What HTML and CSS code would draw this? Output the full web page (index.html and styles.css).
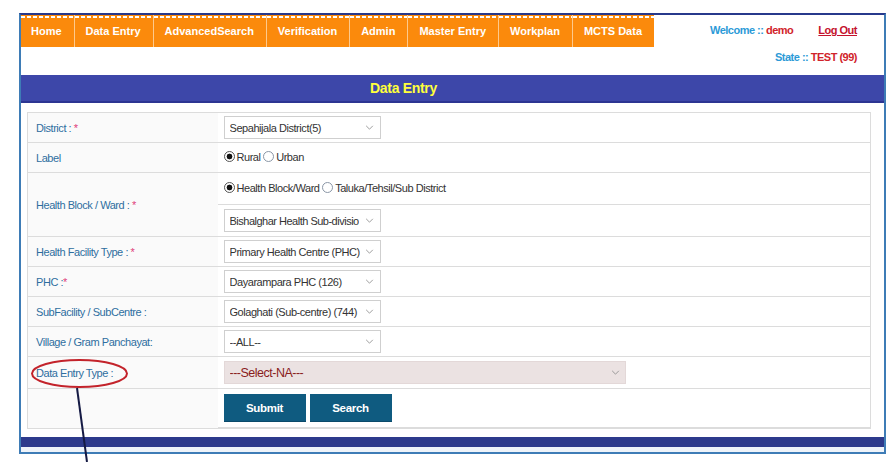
FILE: index.html
```html
<!DOCTYPE html>
<html lang="en">
<head>
<meta charset="utf-8">
<title>Data Entry</title>
<link rel="stylesheet" href="styles.css">
</head>
<body>
<div class="page">
  <div class="frame">
    <header class="top">
      <nav class="tabs">
        <a class="tab tab-home">Home</a>
        <a class="tab">Data Entry</a>
        <a class="tab">AdvancedSearch</a>
        <a class="tab">Verification</a>
        <a class="tab">Admin</a>
        <a class="tab">Master Entry</a>
        <a class="tab">Workplan</a>
        <a class="tab">MCTS Data</a>
      </nav>
      <div class="user">
        <div class="user-line">
          <span class="welcome">Welcome :: <span class="red">demo</span></span>
          <a class="logout">Log Out</a>
        </div>
        <div class="state">State :: <span class="red">TEST (99)</span></div>
      </div>
    </header>

    <h1 class="titlebar">Data Entry</h1>

    <div class="form-wrap">
      <table class="form">
        <tr class="r30">
          <td class="lbl">District : <span class="req">*</span></td>
          <td class="val"><span class="sel"><select><option>Sepahijala District(5)</option></select><svg class="chev" viewBox="0 0 10 6"><path d="M1 1 L5 5 L9 1"/></svg></span></td>
        </tr>
        <tr class="r30">
          <td class="lbl">Label</td>
          <td class="val"><label class="rad"><input type="radio" name="lv" checked>Rural</label> <label class="rad"><input type="radio" name="lv">Urban</label></td>
        </tr>
        <tr class="r32">
          <td class="lbl" rowspan="2">Health Block / Ward : <span class="req">*</span></td>
          <td class="val"><label class="rad"><input type="radio" name="hb" checked>Health Block/Ward</label> <label class="rad"><input type="radio" name="hb">Taluka/Tehsil/Sub District</label></td>
        </tr>
        <tr class="r32">
          <td class="val"><span class="sel sel-clip"><select><option>Bishalghar Health Sub-division (52)</option></select><svg class="chev" viewBox="0 0 10 6"><path d="M1 1 L5 5 L9 1"/></svg></span></td>
        </tr>
        <tr class="r30">
          <td class="lbl">Health Facility Type : <span class="req">*</span></td>
          <td class="val"><span class="sel"><select><option>Primary Health Centre (PHC)</option></select><svg class="chev" viewBox="0 0 10 6"><path d="M1 1 L5 5 L9 1"/></svg></span></td>
        </tr>
        <tr class="r30">
          <td class="lbl">PHC :<span class="req">*</span></td>
          <td class="val"><span class="sel"><select><option>Dayarampara PHC (126)</option></select><svg class="chev" viewBox="0 0 10 6"><path d="M1 1 L5 5 L9 1"/></svg></span></td>
        </tr>
        <tr class="r30">
          <td class="lbl">SubFacility / SubCentre :</td>
          <td class="val"><span class="sel"><select><option>Golaghati (Sub-centre) (744)</option></select><svg class="chev" viewBox="0 0 10 6"><path d="M1 1 L5 5 L9 1"/></svg></span></td>
        </tr>
        <tr class="r30">
          <td class="lbl">Village / Gram Panchayat:</td>
          <td class="val"><span class="sel"><select><option>--ALL--</option></select><svg class="chev" viewBox="0 0 10 6"><path d="M1 1 L5 5 L9 1"/></svg></span></td>
        </tr>
        <tr class="r32">
          <td class="lbl">Data Entry Type :</td>
          <td class="val"><span class="sel sel-wide"><select><option>---Select-NA---</option></select><svg class="chev" viewBox="0 0 10 6"><path d="M1 1 L5 5 L9 1"/></svg></span></td>
        </tr>
        <tr class="r39">
          <td class="lbl"></td>
          <td class="val btns"><button class="btn">Submit</button><button class="btn">Search</button></td>
        </tr>
      </table>
    </div>

    <div class="footer-bar"></div>
  </div>

  <svg class="annot" width="896" height="462" viewBox="0 0 896 462">
    <ellipse cx="79.5" cy="373.5" rx="47.5" ry="13.5" fill="none" stroke="#c3232b" stroke-width="2"/>
    <line x1="77" y1="388" x2="87" y2="462" stroke="#151a44" stroke-width="2"/>
  </svg>
</div>
</body>
</html>
```

FILE: styles.css
```css
* { box-sizing: border-box; }

html, body {
  margin: 0;
  padding: 0;
  background: #ffffff;
}

body {
  font-family: "Liberation Sans", Arial, sans-serif;
  font-size: 11px;
  letter-spacing: -0.45px;
  color: #333;
}

.page {
  position: relative;
  width: 896px;
  height: 462px;
  overflow: hidden;
  padding-top: 13px;
  padding-left: 19px;
}

.frame {
  width: 867px;
  height: 441px;
  border: 2px solid #3e7cb6;
  border-top-color: #27398c;
  display: flex;
  flex-direction: column;
}

/* ---------- top navigation ---------- */
.top {
  display: flex;
  height: 60px;
}

.tabs {
  display: flex;
  height: 32px;
  align-self: flex-start;
}

.tab {
  display: block;
  height: 32px;
  line-height: 33px;
  padding: 0 12px 0 11px;
  background-color: #fb8a0c;
  background-image: repeating-linear-gradient(90deg, #ffffff 0 4px, transparent 4px 6px);
  background-size: 100% 2px;
  background-repeat: no-repeat;
  background-position: 0 1px;
  border-left: 1px solid #fdc98c;
  color: #ffffff;
  font-weight: bold;
  font-size: 11px;
  letter-spacing: 0;
  white-space: nowrap;
}

.tab-home {
  border-left: none;
  padding: 0 12px 0 10px;
}

.user {
  margin-left: auto;
  padding: 7px 27px 0 0;
  display: flex;
  flex-direction: column;
  align-items: flex-end;
  font-weight: bold;
  font-size: 11px;
  letter-spacing: -0.5px;
  color: #2c9ad7;
}

.user-line {
  display: flex;
  gap: 25px;
  line-height: 16px;
}

.red { color: #d1232b; }

.logout {
  color: #c4122c;
  text-decoration: underline;
}

.state {
  margin-top: 11px;
  line-height: 16px;
}

/* ---------- title bar ---------- */
.titlebar {
  margin: 0;
  height: 28px;
  line-height: 27px;
  padding-right: 98px;
  background: #3d47a9;
  border-bottom: 2px solid #2c3592;
  color: #ffff3c;
  text-align: center;
  font-size: 14px;
  letter-spacing: -0.3px;
  font-weight: bold;
}

/* ---------- form ---------- */
.form-wrap {
  padding: 9px 13px 0 6px;
  flex: 1;
}

.form {
  width: 844px;
  border-collapse: collapse;
  border: 1px solid #dcdcdc;
}

.form td {
  border-bottom: 1px solid #dcdcdc;
  padding: 0;
  vertical-align: middle;
}

.r30 { height: 30px; }
.r32 { height: 32px; }
.r39 { height: 39px; }

.lbl {
  width: 190px;
  padding-left: 8px !important;
  color: #2e6e9f;
  background: #fafafa;
}

.req { color: #e0407a; }

.val {
  padding-left: 6px !important;
  background: #ffffff;
}

.sel {
  position: relative;
  display: inline-block;
  vertical-align: middle;
}

.sel select {
  appearance: none;
  -webkit-appearance: none;
  display: block;
  width: 157px;
  height: 23px;
  padding: 0 20px 0 5px;
  border: 1px solid #cfcfcf;
  border-radius: 0;
  background: #ffffff;
  color: #333;
  font-family: inherit;
  font-size: 11px;
  letter-spacing: -0.45px;
}

.sel-clip select {
  padding-right: 6px;
  letter-spacing: -0.5px;
}

.sel-clip::before {
  content: "";
  position: absolute;
  right: 1px;
  top: 1px;
  bottom: 1px;
  width: 21px;
  background: #ffffff;
}

.chev {
  position: absolute;
  right: 7px;
  top: 9px;
  width: 9px;
  height: 5px;
  fill: none;
  stroke: #8a8a8a;
  stroke-width: 1;
}

.sel-wide select {
  width: 402px;
  background: #ebe2e2;
  border-color: #e3d8d8;
  color: #8a1c1c;
  font-size: 12.5px;
  letter-spacing: -0.5px;
}

.sel-wide .chev { right: 6px; }

.rad {
  display: inline-flex;
  align-items: center;
  color: #333;
}

.rad input {
  appearance: none;
  -webkit-appearance: none;
  width: 11px;
  height: 11px;
  margin: 0 2px 0 0;
  border: 1px solid #8a96a6;
  border-radius: 50%;
  background: #ffffff;
}

.rad input:checked {
  border-color: #555;
  background: radial-gradient(circle, #111 0 2.6px, #ffffff 3.2px);
}

.btns { display: flex; }

.btn {
  width: 82px;
  height: 28px;
  margin: 5px 4px 5px 0;
  border: none;
  border-bottom: 1px solid #0a4a6a;
  background: #0f5b80;
  color: #ffffff;
  font-family: inherit;
  font-weight: bold;
  font-size: 11.5px;
  letter-spacing: -0.3px;
}

/* ---------- footer ---------- */
.footer-bar {
  height: 15px;
  border-top: 10px solid #2d3a8c;
  background: #eef3f9;
}

/* ---------- annotation overlay ---------- */
.annot {
  position: absolute;
  left: 0;
  top: 0;
  pointer-events: none;
}
```
